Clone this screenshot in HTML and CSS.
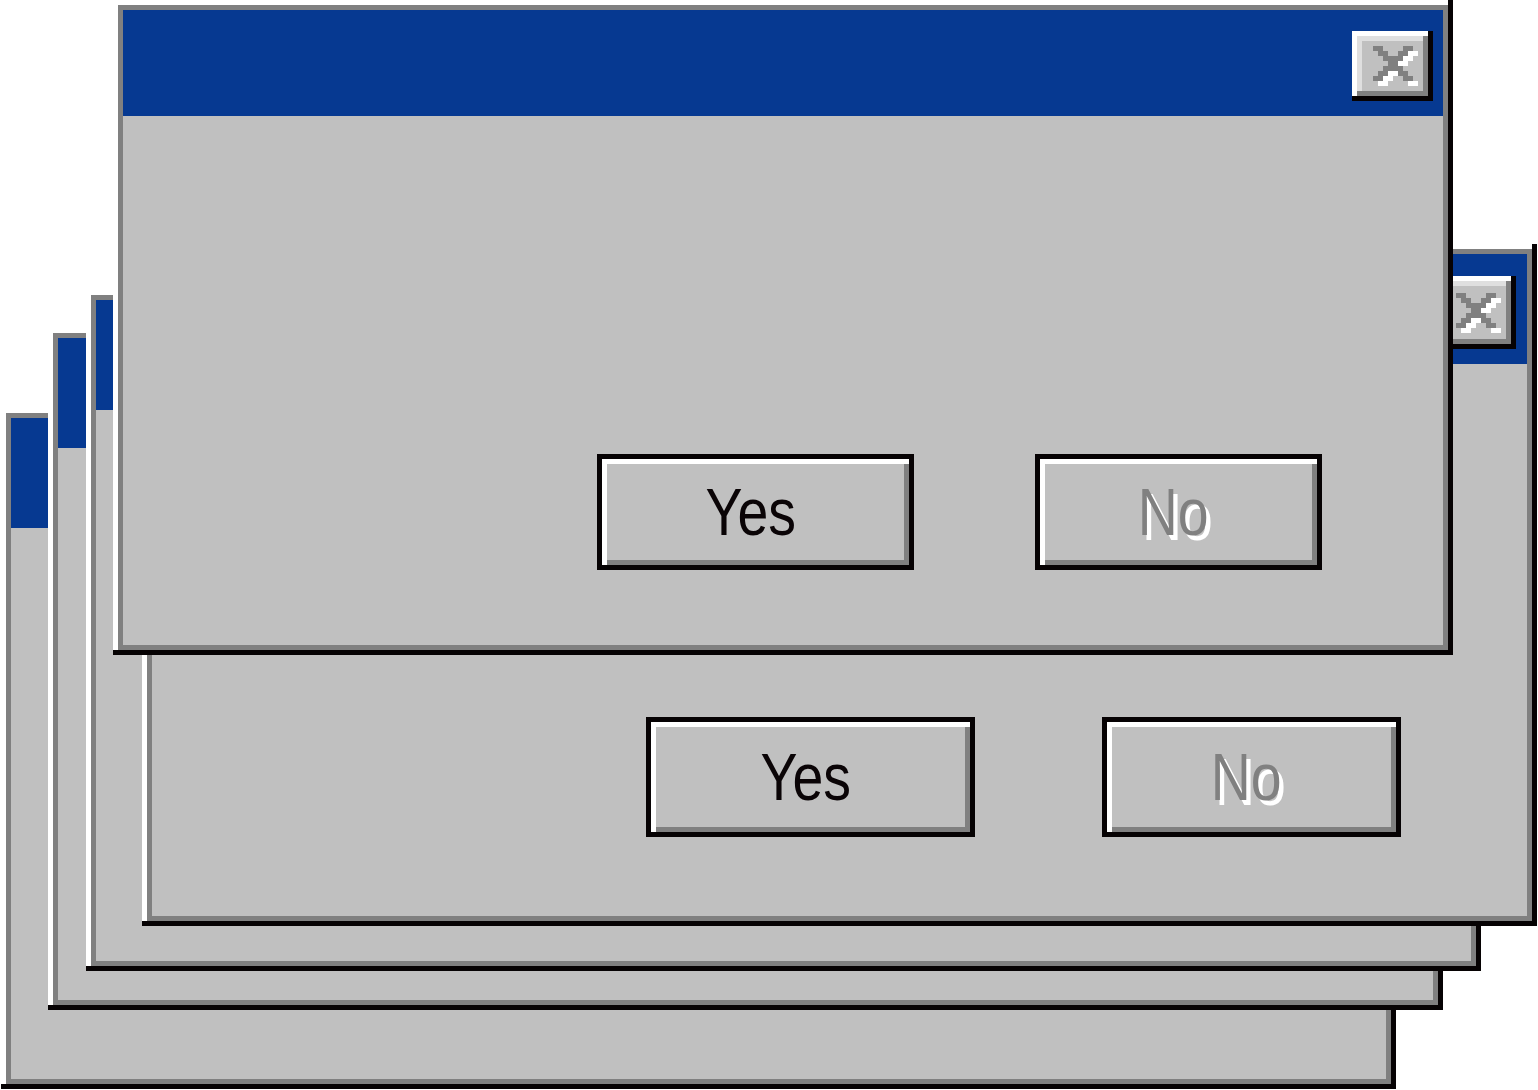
FILE: index.html
```html
<!DOCTYPE html>
<html lang="en">
<head>
<meta charset="utf-8">
<title>Dialogs</title>
<link rel="stylesheet" href="styles.css">
</head>
<body>
<svg class="defs" width="0" height="0" aria-hidden="true">
  <defs>
    <path id="xglyph" d="M0 0h2v1h-2z M6 0h2v1h-2z M1 1h2v1h-2z M5 1h2v1h-2z M2 2h4v1h-4z M3 3h2v1h-2z M2 4h4v1h-4z M1 5h2v1h-2z M5 5h2v1h-2z M0 6h2v1h-2z M6 6h2v1h-2z"/>
  </defs>
</svg>
<main class="desktop">
  <div class="win w1">
    <div class="titlebar"><button class="close"><svg class="xicon" viewBox="0 0 9 8"><use href="#xglyph" fill="#fff" transform="translate(1 1)"/><use href="#xglyph" fill="#808080"/></svg></button></div>
    <div class="content"></div>
  </div>
  <div class="win w2">
    <div class="titlebar"><button class="close"><svg class="xicon" viewBox="0 0 9 8"><use href="#xglyph" fill="#fff" transform="translate(1 1)"/><use href="#xglyph" fill="#808080"/></svg></button></div>
    <div class="content"></div>
  </div>
  <div class="win w3">
    <div class="titlebar"><button class="close"><svg class="xicon" viewBox="0 0 9 8"><use href="#xglyph" fill="#fff" transform="translate(1 1)"/><use href="#xglyph" fill="#808080"/></svg></button></div>
    <div class="content"></div>
  </div>
  <div class="win w4">
    <div class="titlebar"><button class="close"><svg class="xicon" viewBox="0 0 9 8"><use href="#xglyph" fill="#fff" transform="translate(1 1)"/><use href="#xglyph" fill="#808080"/></svg></button></div>
    <div class="content"><div class="actions"><button class="btn btn-yes"><span class="label">Yes</span></button><button class="btn btn-no"><span class="label">No</span></button></div></div>
  </div>
  <div class="win w5 win-front">
    <div class="titlebar"><button class="close"><svg class="xicon" viewBox="0 0 9 8"><use href="#xglyph" fill="#fff" transform="translate(1 1)"/><use href="#xglyph" fill="#808080"/></svg></button></div>
    <div class="content"><div class="actions"><button class="btn btn-yes"><span class="label">Yes</span></button><button class="btn btn-no"><span class="label">No</span></button></div></div>
  </div>
</main>
</body>
</html>
```

FILE: styles.css
```css
html, body {
  margin: 0;
  padding: 0;
  background: #ffffff;
}

.defs {
  position: absolute;
  width: 0;
  height: 0;
  overflow: hidden;
}

.desktop {
  position: relative;
  width: 1538px;
  height: 1090px;
  overflow: hidden;
  background: #ffffff;
  font-family: "Liberation Sans", Arial, sans-serif;
}

/* ---------- window ---------- */
.win {
  position: absolute;
  box-sizing: border-box;
  width: 1395px;
  height: 682px;
  padding: 10px;
  display: flex;
  flex-direction: column;
  background: #c0c0c0;
  box-shadow:
    inset -5px -5px 0 #060203,
    inset 5px 5px 0 #ffffff,
    inset 0 0 0 10px #808080;
}

.w1 { left: 1px;   top: 408px; height: 681px; }
.w2 { left: 48px;  top: 328px; }
.w3 { left: 86px;  top: 290px; height: 681px; }
.w4 { left: 142px; top: 244px; }
.w5 { left: 113px; top: 0;     width: 1340px; height: 655px; }

.titlebar {
  flex: 0 0 110px;
  box-sizing: border-box;
  background: #063991;
  display: flex;
  justify-content: flex-end;
  align-items: flex-start;
  padding: 22px 11px 0 0;
}

.close {
  box-sizing: border-box;
  width: 84px;
  height: 73px;
  margin: 0;
  padding: 0 15px 0 0;
  border: 0;
  background: #c0c0c0;
  display: flex;
  align-items: center;
  justify-content: flex-end;
  box-shadow:
    inset -5px -5px 0 #060203,
    inset 5px 5px 0 #ffffff,
    inset -10px -10px 0 #808080,
    inset 10px 10px 0 #dfdfdf;
}

.xicon {
  display: block;
  width: 45px;
  height: 40px;
  shape-rendering: crispEdges;
}

.content {
  flex: 1 1 auto;
  display: flex;
  flex-direction: column;
  justify-content: flex-end;
  padding: 0 126px 79px 0;
}

.actions {
  display: flex;
  justify-content: flex-end;
  gap: 127px;
}

/* ---------- push buttons ---------- */
.btn {
  box-sizing: border-box;
  height: 120px;
  margin: 0;
  padding: 0 10px 0 0;
  border: 5px solid #060203;
  background: #c0c0c0;
  display: flex;
  align-items: center;
  justify-content: center;
  font-family: "Liberation Sans", Arial, sans-serif;
  font-size: 66px;
  line-height: 1;
  color: #0a0406;
  box-shadow:
    inset 5px 5px 0 #ffffff,
    inset -5px -5px 0 #808080;
}

.btn-yes { width: 329px; }
.btn-no  { width: 299px; }

.label {
  display: inline-block;
  transform: scaleX(0.84);
}

.btn-no .label {
  color: #808080;
  text-shadow: 5px 5px 0 #ffffff;
}

/* ---------- front window is slightly smaller ---------- */
.win-front .titlebar {
  flex-basis: 106px;
  padding: 21px 10px 0 0;
}

.win-front .close {
  width: 81px;
  height: 70px;
}

.win-front .content {
  padding: 0 121px 75px 0;
}

.win-front .actions {
  gap: 121px;
}

.win-front .btn { height: 116px; }
.win-front .btn-yes { width: 317px; }
.win-front .btn-no  { width: 287px; }
```
